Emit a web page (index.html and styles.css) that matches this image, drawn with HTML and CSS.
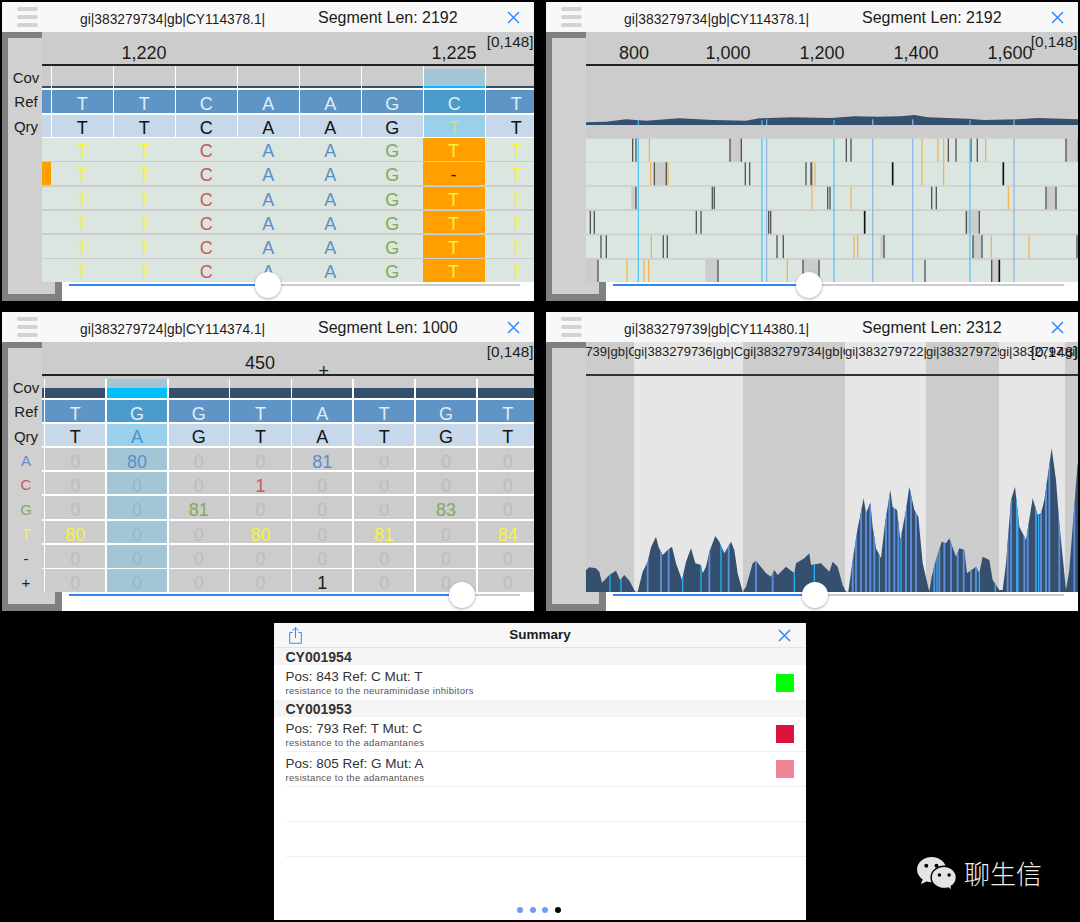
FILE: index.html
```html
<!DOCTYPE html>
<html lang="en">
<head>
<meta charset="utf-8">
<title>Segment viewer</title>
<link rel="stylesheet" href="styles.css">
</head>
<body>
<div class="page">
  <div class="panels">

    <section class="panel">
      <header class="head">
        <div class="burger"><i></i><i></i><i></i></div>
        <div class="seqid">gi|383279734|gb|CY114378.1|</div>
        <div class="seglen">Segment Len: 2192</div>
        <svg class="close" viewBox="0 0 13 13"><path d="M1 1L12 12M12 1L1 12"/></svg>
      </header>
      <div class="stage">
        <aside class="rail">
          <div class="labels"><span>Cov</span><span>Ref</span><span>Qry</span></div>
        </aside>
        <div class="content">
          <div class="main">
            <div class="ruler r-zoom">
              <span class="t1">1,220</span><span class="t2">1,225</span>
              <span class="range">[0,148]</span>
            </div>
            <div class="tbl">
              <div class="r cov"><b></b><b></b><b></b><b></b><b></b><b></b><b></b><b class="hl"></b><b></b></div>
              <div class="r ref"><b></b><b>T</b><b>T</b><b>C</b><b>A</b><b>A</b><b>G</b><b class="hl">C</b><b>T</b></div>
              <div class="r qry"><b></b><b>T</b><b>T</b><b>C</b><b>A</b><b>A</b><b>G</b><b class="hl y">T</b><b>T</b></div>
              <div class="reads">
                <div class="r read"><b></b><b class="y">T</b><b class="y">T</b><b class="c">C</b><b class="a">A</b><b class="a">A</b><b class="g">G</b><b class="or y">T</b><b class="y">T</b></div>
                <div class="r read"><b class="orange"></b><b class="y">T</b><b class="y">T</b><b class="c">C</b><b class="a">A</b><b class="a">A</b><b class="g">G</b><b class="or dk">-</b><b class="y">T</b></div>
                <div class="r read"><b></b><b class="y">T</b><b class="y">T</b><b class="c">C</b><b class="a">A</b><b class="a">A</b><b class="g">G</b><b class="or y">T</b><b class="y">T</b></div>
                <div class="r read"><b></b><b class="y">T</b><b class="y">T</b><b class="c">C</b><b class="a">A</b><b class="a">A</b><b class="g">G</b><b class="or y">T</b><b class="y">T</b></div>
                <div class="r read"><b></b><b class="y">T</b><b class="y">T</b><b class="c">C</b><b class="a">A</b><b class="a">A</b><b class="g">G</b><b class="or y">T</b><b class="y">T</b></div>
                <div class="r read"><b></b><b class="y">T</b><b class="y">T</b><b class="c">C</b><b class="a">A</b><b class="a">A</b><b class="g">G</b><b class="or y">T</b><b class="y">T</b></div>
              </div>
            </div>
          </div>
          <div class="slider"><i class="fill" style="width:186px"></i><i class="thumb"></i><i class="rest"></i></div>
        </div>
      </div>
    </section>

    <section class="panel">
      <header class="head">
        <div class="burger"><i></i><i></i><i></i></div>
        <div class="seqid">gi|383279734|gb|CY114378.1|</div>
        <div class="seglen">Segment Len: 2192</div>
        <svg class="close" viewBox="0 0 13 13"><path d="M1 1L12 12M12 1L1 12"/></svg>
      </header>
      <div class="stage">
        <aside class="rail"></aside>
        <div class="content">
          <div class="main">
            <div class="ruler r-over">
              <span>800</span><span>1,000</span><span>1,200</span><span>1,400</span><span>1,600</span>
              <span class="range">[0,148]</span>
            </div>
            <svg class="lanes" viewBox="120 198 1477.5 648">
              <polygon class="cover" points="120,367 180,365 240,358 300,362 400,355 500,360 600,362 640,355 740,352 855,354 925,349 995,350 1065,349 1105,345 1145,352 1265,356 1315,360 1415,358 1475,354 1600,358 1600,375 120,375"/>
              <g class="band">
                <rect x="120" y="415" width="1480" height="70"/>
                <rect x="120" y="487" width="1480" height="69"/>
                <rect x="120" y="560" width="1480" height="68"/>
                <rect x="120" y="633" width="1480" height="68"/>
                <rect x="120" y="706" width="1480" height="68"/>
                <rect x="120" y="779" width="1480" height="68"/>
              </g>
              <g class="gap">
                <rect x="552" y="415" width="34" height="70"/><rect x="1560" y="415" width="38" height="70"/>
                <rect x="325" y="487" width="36" height="69"/>
                <rect x="256" y="560" width="14" height="68"/><rect x="1500" y="560" width="30" height="68"/>
                <rect x="1261" y="633" width="39" height="68"/>
                <rect x="1003" y="706" width="11" height="68"/><rect x="1281" y="706" width="27" height="68"/>
                <rect x="120" y="779" width="36" height="68"/><rect x="478" y="779" width="38" height="68"/><rect x="771" y="779" width="48" height="68"/><rect x="1337" y="779" width="23" height="68"/>
              </g>
              <g class="tk">
                <path d="M260 415V485M270 415V485M552 415V485M586 415V485M901 415V485M915 415V485M1207 415V485M1230 415V485M1275 415V485M1294 415V485M1560 415V485"/>
                <path d="M325 487V556M361 487V556M598 487V556M611 487V556M780 487V556M795 487V556M797 487V556"/>
                <path d="M270 560V628M499 560V628M505 560V628M845 560V628M852 560V628M1157 560V628M1171 560V628M1500 560V628M1530 560V628"/>
                <path d="M133 633V701M145 633V701M451 633V701M465 633V701M668 633V701M674 633V701M1261 633V701M1300 633V701"/>
                <path d="M165 706V774M181 706V774M352 706V774M364 706V774M693 706V774M712 706V774M1014 706V774M1281 706V774M1308 706V774M1593 706V774"/>
                <path d="M156 779V847M516 779V847M771 779V847M819 779V847M1137 779V847M1337 779V847"/>
              </g>
              <path class="tk-k" d="M1598 415V485M1040 487V556M1372 487V556M956 633V701M1360 779V847"/>
              <path class="tk-o" d="M310 415V485M1128 415V485M1176 415V485M1193 415V485M1319 415V485M314 487V556M366 487V556M807 487V556M807 487V556M1128 487V556M1193 487V556M798 560V628M915 560V628M1387 560V628M316 706V774M924 706V774M935 706V774M1336 706V774M1449 706V774M243 779V847M294 779V847M308 779V847M724 779V847"/>
              <path class="ln-c" d="M277 360V847M648 360V847M864 360V847M1272 360V847"/>
              <path class="ln-p" d="M662 358V847M980 358V847M1100 358V847M1404 358V847"/>
              <rect class="lane-gap" x="120" y="376" width="1480" height="39"/>
            </svg>
          </div>
          <div class="slider"><i class="fill" style="width:183px"></i><i class="thumb"></i><i class="rest"></i></div>
        </div>
      </div>
    </section>

    <section class="panel">
      <header class="head">
        <div class="burger"><i></i><i></i><i></i></div>
        <div class="seqid">gi|383279724|gb|CY114374.1|</div>
        <div class="seglen">Segment Len: 1000</div>
        <svg class="close" viewBox="0 0 13 13"><path d="M1 1L12 12M12 1L1 12"/></svg>
      </header>
      <div class="stage">
        <aside class="rail">
          <div class="labels">
            <span>Cov</span><span>Ref</span><span>Qry</span>
            <span class="a">A</span><span class="c">C</span><span class="g">G</span><span class="y">T</span><span>-</span><span>+</span>
          </div>
        </aside>
        <div class="content">
          <div class="main">
            <div class="ruler r-count">
              <span class="t3">450</span>
              <span class="plus">+</span>
              <span class="range">[0,148]</span>
            </div>
            <div class="tbl counts">
              <div class="r cov"><b></b><b></b><b class="hl"></b><b></b><b></b><b></b><b></b><b></b><b></b></div>
              <div class="r ref"><b></b><b>T</b><b class="hl">G</b><b>G</b><b>T</b><b>A</b><b>T</b><b>G</b><b>T</b></div>
              <div class="r qry"><b></b><b>T</b><b class="hl a2">A</b><b>G</b><b>T</b><b>A</b><b>T</b><b>G</b><b>T</b></div>
              <div class="reads">
                <div class="r num"><b></b><b>0</b><b class="hl a">80</b><b>0</b><b>0</b><b class="a">81</b><b>0</b><b>0</b><b>0</b></div>
                <div class="r num"><b></b><b>0</b><b class="hl">0</b><b>0</b><b class="c">1</b><b>0</b><b>0</b><b>0</b><b>0</b></div>
                <div class="r num"><b></b><b>0</b><b class="hl">0</b><b class="g">81</b><b>0</b><b>0</b><b>0</b><b class="g">83</b><b>0</b></div>
                <div class="r num"><b></b><b class="y">80</b><b class="hl">0</b><b>0</b><b class="y">80</b><b>0</b><b class="y">81</b><b>0</b><b class="y">84</b></div>
                <div class="r num"><b></b><b>0</b><b class="hl">0</b><b>0</b><b>0</b><b>0</b><b>0</b><b>0</b><b>0</b></div>
                <div class="r num"><b></b><b>0</b><b class="hl">0</b><b>0</b><b>0</b><b class="dk">1</b><b>0</b><b>0</b><b>0</b></div>
              </div>
            </div>
          </div>
          <div class="slider"><i class="fill" style="width:380px"></i><i class="thumb"></i><i class="rest"></i></div>
        </div>
      </div>
    </section>

    <section class="panel">
      <header class="head">
        <div class="burger"><i></i><i></i><i></i></div>
        <div class="seqid">gi|383279739|gb|CY114380.1|</div>
        <div class="seglen">Segment Len: 2312</div>
        <svg class="close" viewBox="0 0 13 13"><path d="M1 1L12 12M12 1L1 12"/></svg>
      </header>
      <div class="stage">
        <aside class="rail"></aside>
        <div class="content">
          <div class="main">
            <div class="segs">
              <div class="seg s1"><span>gi|383279739|gb|C</span></div>
              <div class="seg s2"><span>gi|383279736|gb|CY114377.1|</span></div>
              <div class="seg s3"><span>gi|383279734|gb|CY114378.1|</span></div>
              <div class="seg s4"><span>gi|383279722|gb|CY114371.1|</span></div>
              <div class="seg s5"><span>gi|383279729|gb|CY114374.1|</span></div>
              <div class="seg s6"><span>gi|383279718|gb|CY114372.1|</span></div>
              <div class="seg s7"><span>gi|383279714</span></div>
            </div>
            <span class="range">[0,148]</span>
            <svg class="hist" viewBox="120 198 1477.5 648">
              <defs>
                <clipPath id="histclip">
                  <polygon points="120,780 130,772 150,775 160,785 168,818 190,795 210,782 222,810 235,795 250,812 268,845 275,845 290,785 305,755 315,712 330,680 338,712 350,735 365,720 378,710 390,760 408,810 420,755 435,715 448,760 465,765 470,790 480,770 490,725 508,678 520,695 535,730 555,695 565,720 575,790 590,845 600,830 620,760 630,752 660,790 675,800 685,780 695,795 720,770 745,790 750,760 775,745 790,730 795,765 795,846 120,846"/>
                  <polygon transform="translate(795 0)" points="0,765 30,760 55,785 65,755 80,770 95,825 105,845 112,845 125,750 140,655 158,565 165,610 178,578 185,650 195,715 210,745 222,640 238,540 245,592 258,600 268,690 285,600 295,530 310,600 322,620 335,760 355,845 362,800 372,760 392,695 405,700 415,685 435,740 445,715 460,720 468,790 495,770 505,790 515,740 535,750 545,810 565,840 575,840 585,760 600,570 612,530 625,650 645,690 665,565 680,615 690,610 700,570 722,415 735,510 745,640 765,840 775,780 785,650 800,460 805,460 805,846 0,846"/>
                </clipPath>
              </defs>
              <g clip-path="url(#histclip)">
                <rect class="cover" x="120" y="198" width="1480" height="648"/>
                <path class="hc" d="M192 198V846M225 198V846M410 198V846M465 198V846M525 198V846M592 198V846M745 198V846M805 198V846M1000 198V846M1065 198V846M1173 198V846M1300 198V846M1348 198V846M1412 198V846M1478 198V846"/>
                <path class="hp" d="M305 198V846M345 198V846M368 198V846M490 198V846M548 198V846M630 198V846M680 198V846M920 198V846M930 198V846M945 198V846M960 198V846M973 198V846M985 198V846M1020 198V846M1030 198V846M1045 198V846M1057 198V846M1080 198V846M1095 198V846M1110 198V846M1165 198V846M1180 198V846M1195 198V846M1215 198V846M1235 198V846M1253 198V846M1275 198V846M1290 198V846M1385 198V846M1395 198V846M1415 198V846M1435 198V846M1445 198V846M1470 198V846M1485 198V846M1500 198V846M1510 198V846M1540 198V846M1585 198V846"/>
              </g>
            </svg>
          </div>
          <div class="slider"><i class="fill" style="width:189px"></i><i class="thumb"></i><i class="rest"></i></div>
        </div>
      </div>
    </section>

  </div>

  <section class="summary">
    <header class="sum-head">
      <svg class="share" viewBox="0 0 13 17"><path d="M3.5 5.5H.7V16.3H12.3V5.5H9.5M6.5 11V.8M3.5 3.6L6.5 .8L9.5 3.6"/></svg>
      <h1>Summary</h1>
      <svg class="close" viewBox="0 0 13 13"><path d="M1 1L12 12M12 1L1 12"/></svg>
    </header>
    <div class="sec">CY001954</div>
    <div class="item last">
      <div class="txt"><div class="ttl">Pos: 843 Ref: C Mut: T</div><div class="sub">resistance to the neuraminidase inhibitors</div></div>
      <i class="sw green"></i>
    </div>
    <div class="sec">CY001953</div>
    <div class="item">
      <div class="txt"><div class="ttl">Pos: 793 Ref: T Mut: C</div><div class="sub">resistance to the adamantanes</div></div>
      <i class="sw red"></i>
    </div>
    <div class="item">
      <div class="txt"><div class="ttl">Pos: 805 Ref: G Mut: A</div><div class="sub">resistance to the adamantanes</div></div>
      <i class="sw pink"></i>
    </div>
    <div class="item"></div>
    <div class="item"></div>
    <div class="pager"><i></i><i></i><i></i><i class="on"></i></div>
  </section>

  <div class="mark">
    <svg class="wx" viewBox="0 0 42 36">
      <path class="b1" d="M16 1C7.5 1 1 6.8 1 14C1 18.2 3.2 21.8 6.8 24.2L5 29L10.6 26.2C12.4 26.8 14.2 27 16 27C24.5 27 31 21.2 31 14C31 6.8 24.5 1 16 1Z"/>
      <circle class="e" cx="10.5" cy="10" r="2"/><circle class="e" cx="21" cy="10" r="2"/>
      <path class="b2" d="M29 10.5C21.5 10.5 15.5 15.6 15.5 22C15.5 28.4 21.5 33.5 29 33.5C30.4 33.5 31.8 33.3 33 32.9L37 35.5L36.2 31.2C39.4 29.1 41.5 25.8 41.5 22C41.5 15.6 35.5 10.5 29 10.5Z"/>
      <circle class="e" cx="24" cy="19.5" r="1.8"/><circle class="e" cx="34" cy="19.5" r="1.8"/>
    </svg>
    <span>聊生信</span>
  </div>
</div>
</body>
</html>
```

FILE: styles.css
```css
* { box-sizing: border-box; }
html, body { margin: 0; padding: 0; background: #000; }
body { font-family: "Liberation Sans", Arial, sans-serif; color: #1c1c1c; }
.page { position: relative; width: 1080px; height: 922px; overflow: hidden; padding-top: 2px; }
i, b { display: block; font-style: normal; font-weight: 400; }

.panels { display: grid; grid-template-columns: 532px 532px; grid-auto-rows: 299px; column-gap: 12px; row-gap: 11px; padding: 0 2px; }
.panel { display: flex; flex-direction: column; background: #fff; overflow: hidden; }

.head { flex: none; height: 30px; display: flex; align-items: center; padding-left: 15px; background: #f8f8f8; }
.burger { width: 21px; height: 20px; display: flex; flex-direction: column; justify-content: space-between; }
.burger i { height: 4px; border-radius: 2px; background: #d2d2d2; }
.seqid { width: 238px; margin-left: 42px; padding-top: 4px; font-size: 13.8px; white-space: nowrap; }
.seglen { width: 188.5px; font-size: 16px; padding-top: 1px; white-space: nowrap; }
.close { width: 13px; height: 13px; fill: none; stroke: #2f8bf3; stroke-width: 1.5; flex: none; }

.stage { flex: 1; display: grid; min-height: 0; }
.rail, .content { grid-area: 1 / 1; min-width: 0; }
.rail { width: 60px; height: 269px; background: #d0d0d0; border: solid #808080; border-width: 6px 7px 7px 6.5px; }
.labels { width: 36px; padding-top: 27.8px; display: flex; flex-direction: column; text-align: center; font-size: 15px; line-height: 24.4px; }
.content { margin-left: 39.5px; display: flex; flex-direction: column; }

.main { position: relative; height: 250px; flex: none; background: #ccc; overflow: hidden; }
.ruler { position: relative; height: 34px; padding-top: 10px; display: flex; border-bottom: 2px solid #222; background: #ccc; font-size: 18px; line-height: 22px; white-space: nowrap; }
.ruler span { flex: none; text-align: center; }
.range { position: absolute; top: 0; right: 0.5px; font-size: 15.3px; line-height: 20px; white-space: nowrap; }
.t1 { width: 205px; }
.t2 { width: 415px; }
.t3 { width: 437px; }
.ruler .plus { position: absolute; left: 277px; top: 19px; line-height: 20px; }
.r-over span:not(.range) { width: 94px; }
.r-over { padding-left: 1.5px; }

.tbl { display: flex; flex-direction: column; background: #fff; height: 216px; }
.r { display: grid; grid-template-columns: 9px repeat(8, 60.5px); grid-template-rows: minmax(0, 1fr); column-gap: 1.5px; flex: none; font-size: 18px; text-align: center; white-space: nowrap; }
.counts .r { grid-template-columns: 2px repeat(8, 60.3px); }
.cov { height: 22px; margin-bottom: 2px; }
.cov b { background: #ccc; border-bottom: 2px solid #34506e; }
.cov b.hl { background: #a2c6d6; border-top: 3px solid #ccc; border-bottom-color: #00bfff; }
.ref { height: 22.5px; margin-bottom: 2px; line-height: 28px; }
.ref b { background: #5f95c6; color: #e2ecf5; }
.ref b.hl { background: #4a9acc; }
.qry { height: 22px; margin-bottom: 1.5px; line-height: 26px; }
.qry b { background: #c6d8ea; color: #111; }
.qry b.hl { background: #9bd0ec; }
.qry b.hl.y { color: #c9e27c; }
.qry b.hl.a2 { color: #4a92cb; }
.reads { display: flex; flex-direction: column; row-gap: 1.7px; background: #ccc; flex: 1; }
.read { height: 22.6px; line-height: 26px; background: #dae6df; }
.orange { background: #ff9f00; }
.read .or { background: #ff9f00; margin-left: -1.5px; }

.y { color: #f8f240; }
.c { color: #c85a5a; }
.a { color: #5b8fc9; }
.g { color: #84a85c; }
.dk { color: #222; }
.read b.dk { color: #222; }

.counts .cov { height: 22px; border-top: 3px solid #ccc; margin-bottom: 1.5px; }
.counts .cov b { border-bottom-width: 10.5px; }
.counts .cov b.hl { border-top: 0; }
.counts .reads { background: #fff; row-gap: 1.8px; }
.num { height: 22.6px; line-height: 28px; }
.num b { background: #ccc; color: #bdbdbd; overflow: hidden; }
.num b.hl { background: #a2c6d6; color: #92b8c9; }
.num b.a { color: #5b8fc9; }
.num b.c { color: #c85a5a; }
.num b.g { color: #84a85c; }
.num b.y { color: #f8f240; }
.num b.dk { color: #1c1c1c; }

.lanes { display: block; width: 492.5px; height: 216px; }
.cover { fill: #34506e; }
.band rect { fill: #dae6df; }
.gap rect { fill: #ccc; }
.lane-gap { fill: #ccc; }
.tk path { fill: none; stroke: #555; stroke-width: 4; }
.tk-k { fill: none; stroke: #111; stroke-width: 5; }
.tk-o { fill: none; stroke: #f0b040; stroke-width: 3.5; }
.ln-c { fill: none; stroke: #48c3f2; stroke-width: 3.5; }
.ln-p { fill: none; stroke: #8fb2e8; stroke-width: 3.5; }

.segs { display: flex; height: 250px; }
.seg { flex: none; overflow: hidden; display: flex; flex-direction: column; }
.seg span { height: 34px; flex: none; border-bottom: 2px solid #333; padding-top: 0; font-size: 13px; line-height: 20px; white-space: nowrap; overflow: hidden; }
.s1 { width: 48.5px; background: #ccc; }
.s1 span { text-indent: -57px; }
.s2 { width: 109px; background: #e6e6e6; }
.s3 { width: 102px; background: #ccc; }
.s4 { width: 81px; background: #e6e6e6; }
.s5 { width: 73px; background: #ccc; }
.s6 { width: 66px; background: #e6e6e6; }
.s7 { width: 13px; background: #ccc; }
.hist { position: absolute; left: 0; top: 34px; width: 492.5px; height: 216px; }
.hc { fill: none; stroke: #22b4f2; stroke-width: 4; }
.hp { fill: none; stroke: #5f8fdc; stroke-width: 5.5; }

.slider { position: relative; margin: 2px 0 0 27.5px; width: 451px; height: 2px; display: flex; align-items: center; flex: none; }
.fill { height: 2px; background: #2e86f0; flex: none; }
.thumb { flex: none; width: 26px; height: 26px; border-radius: 50%; background: #fff; box-shadow: 0 1px 3px rgba(0,0,0,.35); position: relative; }
.rest { flex: 1; height: 2px; background: #ccc; }

.summary { width: 532px; height: 297px; margin: 12px auto 0; background: #fff; display: flex; flex-direction: column; }
.sum-head { height: 25px; flex: none; display: flex; align-items: center; justify-content: space-between; padding: 0 15px; background: #f7f7f7; border-bottom: 1px solid #e4e4e4; }
.sum-head h1 { margin: 0 0 2px; font-size: 13.5px; font-weight: 700; }
.share { width: 13px; height: 17px; fill: none; stroke: #2f8bf3; stroke-width: 1; }
.sec { height: 17px; flex: none; padding-left: 11.5px; background: #f5f5f5; font-size: 14px; font-weight: 700; line-height: 19px; color: #333; }
.item { height: 35px; flex: none; margin-left: 11.5px; padding-right: 12.5px; display: flex; align-items: center; justify-content: space-between; border-bottom: 1px solid #efefef; }
.item.last { border-bottom: 0; }
.ttl { font-size: 13.5px; line-height: 15px; color: #333; padding-top: 1px; }
.sub { font-size: 9.5px; line-height: 13px; color: #555; letter-spacing: .31px; }
.sw { width: 18px; height: 18px; }
.green { background: #00ff00; }
.red { background: #dc143c; }
.pink { background: #f08497; }
.pager { margin-top: auto; padding-bottom: 7.5px; display: flex; justify-content: center; gap: 6.5px; padding-right: 2px; }
.pager i { width: 6px; height: 6px; border-radius: 50%; background: #6e9ef5; }
.pager i.on { background: #000; }

.mark { position: absolute; left: 916px; top: 855px; display: flex; align-items: center; gap: 7px; }
.wx { width: 41px; height: 35px; }
.b1, .b2 { fill: #e4e4e4; }
.b2 { stroke: #000; stroke-width: 1.5; }
.e { fill: #000; }
.mark span { font-family: "Noto Sans CJK SC", sans-serif; font-weight: 300; font-size: 26px; line-height: 36px; color: #eee; white-space: nowrap; }
```
